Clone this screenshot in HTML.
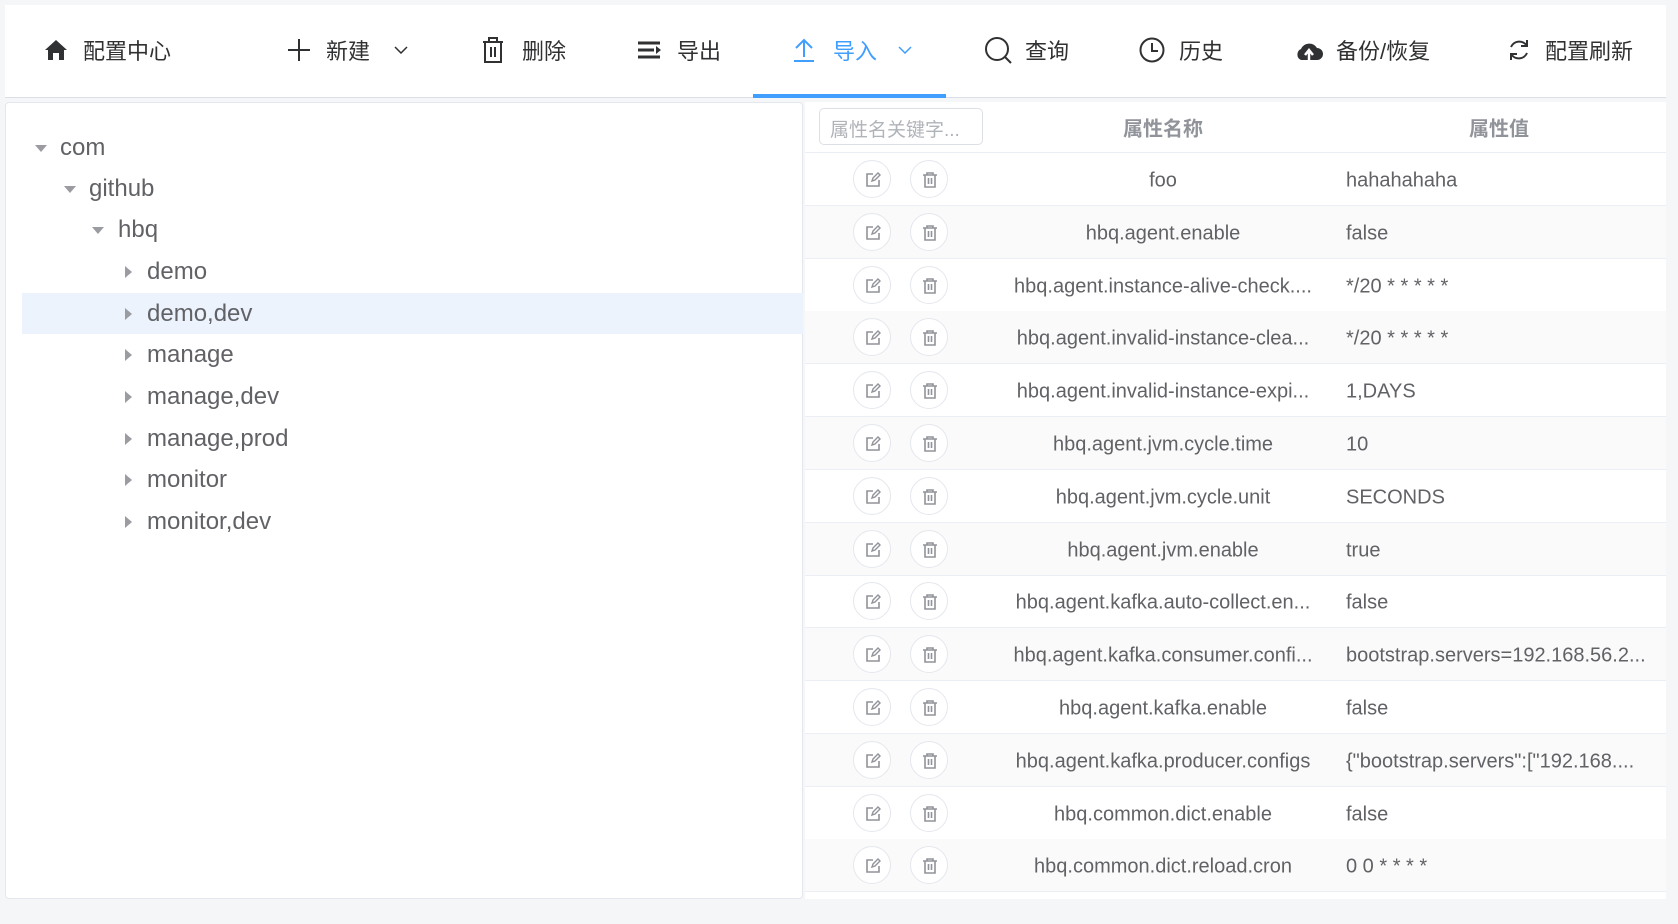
<!DOCTYPE html>
<html><head><meta charset="utf-8">
<style>
*{margin:0;padding:0;box-sizing:border-box}
body{width:1678px;height:924px;background:#f5f6f8;font-family:"Liberation Sans","Noto Sans CJK SC",sans-serif;position:relative;overflow:hidden;color:#303133}
.hdr{position:absolute;left:5px;top:5px;width:1661px;height:93px;background:#fff;border-bottom:1px solid #dcdfe6}
.nav{position:absolute;top:50px;transform:translateY(-50%);font-size:22px;color:#303133;display:flex;align-items:center;white-space:nowrap}
.active{color:#409eff}
.ul{position:absolute;left:753px;top:94px;width:193px;height:4px;background:#409eff}
.left{position:absolute;left:5px;top:102px;width:798px;height:797px;background:#fff;border:1px solid #e4e7ed;border-radius:4px}
.node{position:absolute;font-size:24px;color:#606266;transform:translateY(-50%)}
.tri{position:absolute;width:0;height:0}
.td{border-left:6px solid transparent;border-right:6px solid transparent;border-top:7px solid #9a9ca1}
.tr{border-top:6px solid transparent;border-bottom:6px solid transparent;border-left:7px solid #9a9ca1}
.sel{position:absolute;left:22px;top:293px;width:781px;height:41px;background:#ecf3fd}
.right{position:absolute;left:805px;top:102px;width:861px;height:797px;background:#fff}
.th{position:absolute;left:0;top:0;width:861px;height:51px;border-bottom:1px solid #ebeef5}
.inp{position:absolute;left:14px;top:6px;width:164px;height:37px;border:1px solid #dcdfe6;border-radius:5px;font-size:19px;color:#b0b3b8;padding:6px 10px;white-space:nowrap;overflow:hidden}
.thc{position:absolute;top:25px;transform:translate(-50%,-50%);font-size:20px;font-weight:bold;color:#909399}
.row{position:absolute;left:0;width:861px;height:53px;border-bottom:1px solid #ebeef5;font-size:20px;color:#606266}
.row.alt{background:#fafafa}
.btn{position:absolute;top:7px;width:38px;height:38px;border:1px solid #e4e7ed;border-radius:50%;background:#fff}
.btn svg{position:absolute;left:10px;top:10px}
.nm{position:absolute;left:358px;top:28px;transform:translate(-50%,-50%);white-space:nowrap}
.vl{position:absolute;left:541px;top:28px;transform:translateY(-50%);white-space:nowrap}
</style></head><body>
<div class="hdr"></div>
<div class="ul"></div>
<svg style="position:absolute;left:44px;top:39px" width="24" height="22" viewBox="0 0 24 22"><path d="M12 1 L23 11 L20 11 L20 21 L15 21 L15 14 L9 14 L9 21 L4 21 L4 11 L1 11 Z" fill="#303133"/></svg>
<div class="nav" style="left:83px">配置中心</div>
<svg style="position:absolute;left:288px;top:39px" width="22" height="22"><path d="M11 0V22M0 11H22" stroke="#303133" stroke-width="2"/></svg>
<div class="nav" style="left:326px">新建</div>
<svg style="position:absolute;left:394px;top:46px" width="14" height="8"><path d="M1 1L7 7L13 1" stroke="#303133" fill="none" stroke-width="1.5"/></svg>
<svg style="position:absolute;left:482px;top:37px" width="22" height="26" viewBox="0 0 22 26"><path d="M1 5H21M7 5V1H15V5M3 5V25H19V5M9 10V20M13 10V20" stroke="#303133" fill="none" stroke-width="2"/></svg>
<div class="nav" style="left:522px">删除</div>
<svg style="position:absolute;left:638px;top:41px" width="24" height="18"><path d="M0 2H22M0 9H16M0 16H22" stroke="#303133" stroke-width="3"/><path d="M18 5L23 9L18 13Z" fill="#303133"/></svg>
<div class="nav" style="left:677px">导出</div>
<svg style="position:absolute;left:793px;top:38px" width="22" height="24"><path d="M11 19V2M3 10L11 2L19 10M1 23H21" stroke="#409eff" fill="none" stroke-width="2"/></svg>
<div class="nav active" style="left:833px">导入</div>
<svg style="position:absolute;left:898px;top:46px" width="14" height="8"><path d="M1 1L7 7L13 1" stroke="#409eff" fill="none" stroke-width="1.5"/></svg>
<svg style="position:absolute;left:985px;top:37px" width="28" height="28"><circle cx="12" cy="12" r="11" stroke="#303133" fill="none" stroke-width="2"/><path d="M20 20L26 26" stroke="#303133" stroke-width="2"/></svg>
<div class="nav" style="left:1025px">查询</div>
<svg style="position:absolute;left:1139px;top:37px" width="26" height="26"><circle cx="13" cy="13" r="11.5" stroke="#303133" fill="none" stroke-width="2"/><path d="M13 6V14H19" stroke="#303133" fill="none" stroke-width="2"/></svg>
<div class="nav" style="left:1179px">历史</div>
<svg style="position:absolute;left:1295px;top:40px" width="28" height="22" viewBox="0 0 28 22"><path d="M6 20A6 6 0 0 1 6 9A9 9 0 0 1 22 8A6 6 0 0 1 22 20Z" fill="#303133"/><path d="M14 20V11M10 15L14 10L18 15" stroke="#fff" fill="none" stroke-width="2.5"/></svg>
<div class="nav" style="left:1336px">备份/恢复</div>
<svg style="position:absolute;left:1507px;top:38px" width="24" height="24"><path d="M20 8A9 9 0 0 0 4 9M4 16A9 9 0 0 0 20 15" stroke="#303133" fill="none" stroke-width="2"/><path d="M20 2V8H14M4 22V16H10" stroke="#303133" fill="none" stroke-width="2"/></svg>
<div class="nav" style="left:1545px">配置刷新</div>

<div class="left"></div>
<div class="sel"></div>
<div class="tri td" style="left:35px;top:145px"></div><div class="node" style="left:60px;top:148px">com</div>
<div class="tri td" style="left:64px;top:186px"></div><div class="node" style="left:89px;top:189px">github</div>
<div class="tri td" style="left:92px;top:227px"></div><div class="node" style="left:118px;top:230px">hbq</div>
<div class="tri tr" style="left:125px;top:266px"></div><div class="node" style="left:147px;top:272px">demo</div>
<div class="tri tr" style="left:125px;top:308px"></div><div class="node" style="left:147px;top:314px">demo,dev</div>
<div class="tri tr" style="left:125px;top:349px"></div><div class="node" style="left:147px;top:355px">manage</div>
<div class="tri tr" style="left:125px;top:391px"></div><div class="node" style="left:147px;top:397px">manage,dev</div>
<div class="tri tr" style="left:125px;top:433px"></div><div class="node" style="left:147px;top:439px">manage,prod</div>
<div class="tri tr" style="left:125px;top:474px"></div><div class="node" style="left:147px;top:480px">monitor</div>
<div class="tri tr" style="left:125px;top:516px"></div><div class="node" style="left:147px;top:522px">monitor,dev</div>

<div class="right">
<div class="th"><div class="inp">属性名关键字...</div><div class="thc" style="left:358px">属性名称</div><div class="thc" style="left:694px">属性值</div></div>
</div>
<div id="rows" style="position:absolute;left:805px;top:153px"></div>
<script>
var d=[["foo","hahahahaha"],["hbq.agent.enable","false"],["hbq.agent.instance-alive-check....","*/20 * * * * *"],["hbq.agent.invalid-instance-clea...","*/20 * * * * *"],["hbq.agent.invalid-instance-expi...","1,DAYS"],["hbq.agent.jvm.cycle.time","10"],["hbq.agent.jvm.cycle.unit","SECONDS"],["hbq.agent.jvm.enable","true"],["hbq.agent.kafka.auto-collect.en...","false"],["hbq.agent.kafka.consumer.confi...","bootstrap.servers=192.168.56.2..."],["hbq.agent.kafka.enable","false"],["hbq.agent.kafka.producer.configs","{\"bootstrap.servers\":[\"192.168...."],["hbq.common.dict.enable","false"],["hbq.common.dict.reload.cron","0 0 * * * *"]];
var ed='<svg width="18" height="18" viewBox="0 0 18 18"><path d="M9 3H3V15H15V9" stroke="#909399" fill="none" stroke-width="1.6"/><path d="M8 10L9 7L14 2L16 4L11 9Z" stroke="#909399" fill="none" stroke-width="1.4"/></svg>';
var tr='<svg width="18" height="18" viewBox="0 0 18 18"><path d="M2 4H16M6 4V2H12V4M4 4V16H14V4M7.5 7V13M10.5 7V13" stroke="#909399" fill="none" stroke-width="1.6"/></svg>';
var h='';for(var i=0;i<d.length;i++){h+='<div class="row'+(i%2?' alt':'')+'" style="top:'+(i*52.8)+'px"><div class="btn" style="left:48px">'+ed+'</div><div class="btn" style="left:105px">'+tr+'</div><div class="nm">'+d[i][0].replace(/</g,'&lt;')+'</div><div class="vl">'+d[i][1]+'</div></div>';}
document.getElementById('rows').innerHTML=h;
</script>
</body></html>
